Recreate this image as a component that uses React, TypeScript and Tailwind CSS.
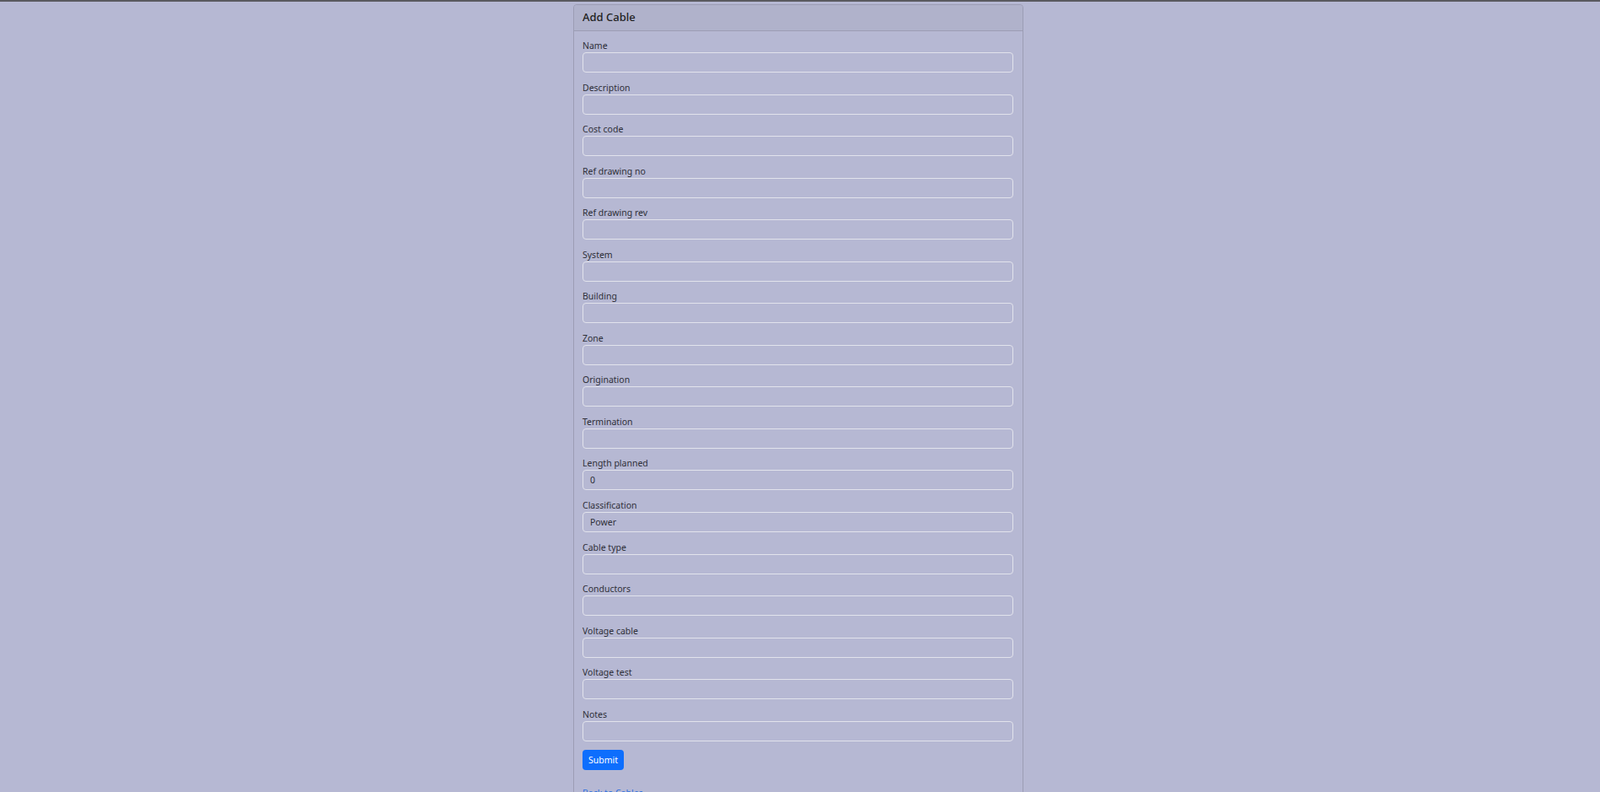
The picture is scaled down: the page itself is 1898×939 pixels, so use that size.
import React from 'react'

const fields = [
  { label: 'Name', value: '' },
  { label: 'Description', value: '' },
  { label: 'Cost code', value: '' },
  { label: 'Ref drawing no', value: '' },
  { label: 'Ref drawing rev', value: '' },
  { label: 'System', value: '' },
  { label: 'Building', value: '' },
  { label: 'Zone', value: '' },
  { label: 'Origination', value: '' },
  { label: 'Termination', value: '' },
  { label: 'Length planned', value: '0' },
  { label: 'Classification', value: 'Power' },
  { label: 'Cable type', value: '' },
  { label: 'Conductors', value: '' },
  { label: 'Voltage cable', value: '' },
  { label: 'Voltage test', value: '' },
  { label: 'Notes', value: '' },
]

const App = () => {
  return (
    <div
      className="min-h-[939px] bg-[#b6b8d3] border-t-2 border-[#5a5a5f] pt-[3px]"
      style={{ fontFamily: '"Noto Sans", "Open Sans", sans-serif' }}
    >
      <div className="ml-[680px] w-[534px] rounded-[4px] border border-[#9c9db4]">
        <div className="h-[31px] flex items-start pt-[5px] px-[10px] bg-[#b0b2cb] border-b border-[#9c9db4] rounded-t-[4px]">
          <h5 className="text-[13px] font-medium text-[#222] leading-[18px]">Add Cable</h5>
        </div>

        <form className="pl-[10px] pr-[11px] pt-[9px] pb-6">
          <div className="flex flex-col gap-[9.56px]">
            {fields.map((f) => (
              <div key={f.label}>
                <label className="block text-[10.5px] leading-[16px] text-[#2e2f38]">{f.label}</label>
                <input
                  readOnly
                  value={f.value}
                  className="block w-full h-[24px] px-[8px] text-[10.5px] text-[#2e2f38] bg-transparent border border-[#e2e3ec] rounded-[4px] outline-none"
                />
              </div>
            ))}
          </div>

          <button
            type="button"
            className="mt-[10px] h-[24px] w-[49px] rounded-[4px] bg-[#0d6efd] text-white text-[10.5px] leading-none"
          >
            Submit
          </button>

          <div className="mt-[13px]">
            <a href="#" className="text-[10.5px] text-[#2b6fe0] underline">
              Back to Cables
            </a>
          </div>
        </form>
      </div>
    </div>
  )
}

export default App
